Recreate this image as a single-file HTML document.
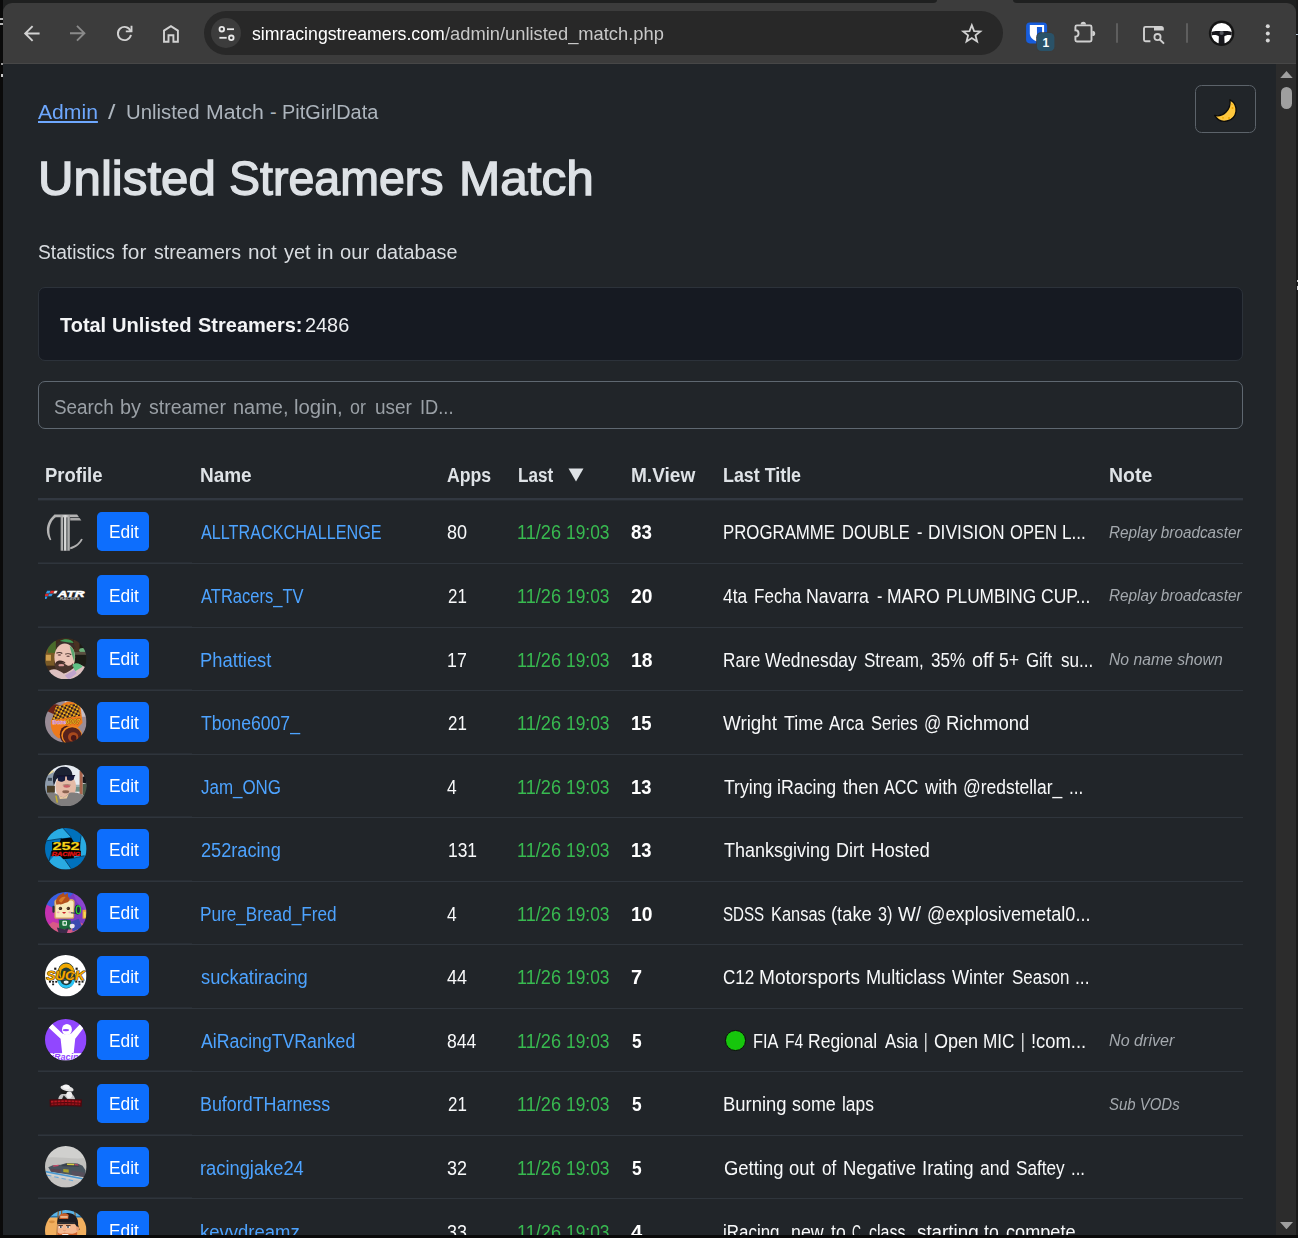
<!DOCTYPE html>
<html lang="en"><head><meta charset="utf-8"><title>Unlisted Streamers Match</title>
<style>
html,body{margin:0;padding:0}
body{width:1298px;height:1238px;background:#0a0a0a;position:relative;overflow:hidden;font-family:"Liberation Sans",sans-serif}
.t{position:absolute;white-space:nowrap;line-height:1;display:inline-block;transform-origin:0 0}
.abs,#frame div,#frame svg{position:absolute}
#top{left:3.2px;top:0;width:1292.8px;height:14px;background:#1f2020}
#tab{left:930px;top:0;width:90px;height:12px;background:#3c3c3c}
#topL{left:3.2px;top:0;width:933.8px;height:3px;background:#1f2020;border-bottom-right-radius:4px 3px}
#topR{left:1013px;top:0;width:283px;height:3px;background:#1f2020;border-bottom-left-radius:4px 3px}
.mk{background:#b4b4b4}
#toolbar{left:3.2px;top:3px;width:1292.5px;height:60.5px;background:#3c3c3c;border-radius:9px 9px 0 0}
#tbline{left:3.2px;top:63px;width:1292.5px;height:1px;background:#474747}
#rstrip{left:1295.7px;top:0;width:3px;height:1238px;background:#1b1b1b}
#page{left:3.2px;top:64px;width:1272.8px;height:1171.3px;background:#212529}
#sb{left:1276px;top:64px;width:19.7px;height:1171.3px;background:#2c2c2c}
#thumb{left:1280.5px;top:87.2px;width:11.5px;height:22px;border-radius:6px;background:#9f9f9f}
#omni{left:204px;top:11px;width:799px;height:43.5px;border-radius:22px;background:#282828}
#chip{left:211px;top:18px;width:30px;height:30px;border-radius:15px;background:#3c3c3c}
.sep{width:2px;height:20px;top:23px;background:#5e5e5e;border-radius:1px}
#moonbtn{left:1195px;top:85px;width:61px;height:48px;box-sizing:border-box;border:1.25px solid #5c636a;border-radius:6.5px}
#stats{left:38px;top:287px;width:1205px;height:73.5px;box-sizing:border-box;border:1px solid #2c323a;border-radius:7px;background:#161a22}
#search{left:38px;top:381px;width:1205px;height:48px;box-sizing:border-box;border:1.25px solid #5f6871;border-radius:7px;background:#212529}
#hb{left:38px;top:498px;width:1205px;height:2px;background:#323841}
#hb2{left:38px;top:500px;width:1205px;height:1px;background:#272c31}
.rb{left:38px;width:1205px;height:1px;background:#2f353c}
.rb2{left:38px;width:154px;height:1px;background:#282d33}
.btn{left:96.8px;width:52.4px;height:39.6px;border-radius:4.7px;background:#0d6efd}
.av{left:45.3px;overflow:hidden}
.gdot{left:725px;width:20.6px;height:20.6px;border-radius:10.3px;background:#16c60c;box-sizing:border-box;border:1px solid #0b0b0b}
</style></head>
<body>
<div id="frame">
<div id="top"></div><div id="tab"></div><div id="topL"></div><div id="topR"></div>
<div id="toolbar"></div><div id="tbline"></div>
<div id="rstrip"></div>
<div class="mk" style="left:0;top:18px;width:3.3px;height:2px"></div><div class="mk" style="left:0;top:23px;width:3.3px;height:2px"></div>
<div class="mk" style="left:1px;top:63px;width:2.2px;height:2px;background:#9a9a9a"></div><div class="mk" style="left:1px;top:74px;width:2.2px;height:2.5px;background:#c8c8c8"></div>
<div class="mk" style="left:1296px;top:33.500px;width:2px;height:1.5px;background:#b8c8d8"></div>
<div class="mk" style="left:1296.5px;top:280px;width:1.5px;height:2px;background:#d0d0d0"></div><div class="mk" style="left:1296.5px;top:286px;width:1.5px;height:4px;background:#d0d0d0"></div>
<div id="omni"></div><div id="chip"></div>
<div class="sep" style="left:1115.8px"></div><div class="sep" style="left:1185.8px"></div>
<svg id="tbicons" style="left:0;top:0" width="1298" height="64" viewBox="0 0 1298 64" fill="none" stroke="#d2d2d2" stroke-width="1.9">
<!-- back -->
<path d="M39.6 33.5H26M32.6 26.1L25.2 33.5L32.6 40.9"/>
<!-- forward (disabled) -->
<path d="M70 33.2H83.6M77 25.8L84.4 33.2L77 40.6" stroke="#8a8a8a"/>
<!-- reload -->
<path d="M130.95 34.9A6.6 6.6 0 1 1 130.6 31"/>
<path d="M131.5 25.7V31.4H125.8"/>
<!-- home -->
<path d="M164 41.7V30.6L170.95 26.1L177.9 30.6V41.7H173.4V35.3H168.5V41.7Z"/>
<!-- tune -->
<g stroke="#e8e8e8" stroke-width="1.8">
<circle cx="221.8" cy="29.2" r="2.3"/><path d="M227 29.2H234"/>
<circle cx="231.3" cy="37.8" r="2.3"/><path d="M219.4 37.8H226.7"/>
</g>
<!-- star -->
<path d="M971.80 25.20L974.09 31.04L980.36 31.42L975.51 35.41L977.09 41.48L971.80 38.10L966.51 41.48L968.09 35.41L963.24 31.42L969.51 31.04Z" stroke-width="1.8" stroke-linejoin="miter"/>
<!-- bitwarden -->
<rect x="1026.1" y="22.4" width="21" height="21" rx="3.8" fill="#175ddc" stroke="none"/>
<path d="M1029.8 25H1044.1V33.5C1044.1 37.5 1040.5 40 1036.95 41.6C1033.4 40 1029.8 37.5 1029.8 33.5Z" fill="#ffffff" stroke="none"/>
<path d="M1036.95 27H1042.1V33.5C1042.1 36.3 1039.6 38.2 1036.95 39.5Z" fill="#175ddc" stroke="none"/>
<rect x="1036.2" y="32.2" width="19" height="19.4" rx="5" fill="#3c3c3c" stroke="none"/>
<rect x="1037" y="33" width="17.4" height="18" rx="4.3" fill="#2a5268" stroke="none"/>
<!-- puzzle -->
<path d="M1075.4 36.6A3.15 3.15 0 0 0 1075.4 30.3V26.9Q1075.4 25.4 1076.9 25.4H1090Q1091.5 25.4 1091.5 26.9V40Q1091.5 41.5 1090 41.5H1076.9Q1075.4 41.5 1075.4 40Z" stroke="#d0d0d0"/>
<path d="M1080.6 24.6A2.7 2.9 0 0 1 1086 24.6Z" fill="#d0d0d0" stroke="none"/>
<path d="M1092.3 30.7A2.9 2.7 0 0 1 1092.3 36.1Z" fill="#d0d0d0" stroke="none"/>
<!-- tab search -->
<path d="M1150.4 41.2H1145.5Q1144 41.2 1144 39.7V28.4Q1144 26.9 1145.5 26.9H1155" stroke="#d0d0d0"/>
<path d="M1154 25.9H1161.3Q1163.8 25.9 1163.8 28.4V30.6H1154Z" fill="#d0d0d0" stroke="none"/>
<circle cx="1157.5" cy="37.1" r="3.1" stroke="#d0d0d0" stroke-width="1.8"/>
<path d="M1159.8 39.5L1164 43.6" stroke="#d0d0d0"/>
<!-- profile -->
<circle cx="1221.6" cy="33.3" r="12.7" fill="#151515" stroke="none"/>
<circle cx="1221.6" cy="33.3" r="10.4" fill="#ffffff" stroke="none"/>
<path d="M1211.3 32.2C1215 30.6 1218 31.2 1221.6 31.2C1225.2 31.2 1228.2 30.6 1231.9 32.2L1231.6 35.6C1228 34.6 1226 35.2 1224.3 36.6L1224.6 44H1218.6L1218.9 36.6C1217.2 35.2 1215.2 34.6 1211.6 35.6Z" fill="#17171c" stroke="none"/>
<circle cx="1221.6" cy="33" r="2.1" fill="#55585f" stroke="none"/>
<!-- menu dots -->
<g fill="#d6d6d6" stroke="none"><circle cx="1267.8" cy="26.3" r="2"/><circle cx="1267.8" cy="33.5" r="2"/><circle cx="1267.8" cy="40.6" r="2"/></g>
</svg>

<div id="page"></div>
<div id="sb"></div><div id="thumb"></div>
<svg style="left:1279.8px;top:71px" width="13" height="7.3" viewBox="0 0 13 7.3"><path d="M0 7.3 L6.5 0 L13 7.3Z" fill="#9f9f9f"/></svg>
<svg style="left:1279.8px;top:1222.2px" width="13" height="7.3" viewBox="0 0 13 7.3"><path d="M0 0 L6.5 7.3 L13 0Z" fill="#9f9f9f"/></svg>
<div id="moonbtn"></div>
<svg style="left:1210px;top:95px" width="32" height="32" viewBox="1210 95 32 32">
<path d="M1229.9 99.6C1239.5 105.5 1237.5 118.5 1227 121C1222 122.2 1217.3 119.8 1214.6 115.4C1222.5 117.6 1231.5 110 1229.9 99.6Z" fill="#ffc83d" stroke="#0c0c0c" stroke-width="1.3" stroke-linejoin="round"/>
<circle cx="1232.5" cy="108" r="1" fill="#f0a800"/><circle cx="1232" cy="104.6" r="0.7" fill="#f0a800"/><circle cx="1223" cy="117.8" r="0.9" fill="#f0a800"/><circle cx="1229" cy="118" r="1" fill="#f0a800"/>
</svg>

<div id="stats"></div>
<div id="search"></div>
<svg width="0" height="0" style="left:0;top:0"><defs><clipPath id="cc"><circle cx="21" cy="21" r="21"/></clipPath><filter id="bl" x="-10%" y="-10%" width="120%" height="120%"><feGaussianBlur stdDeviation="0.7"/></filter></defs></svg>
<div id="hb"></div><div id="hb2"></div>
<div class="rb" style="top:563px"></div><div class="rb2" style="top:562px"></div>
<div class="btn" style="top:511.55px"></div>
<svg class="av" style="top:510.60px" width="41.5" height="41.5" viewBox="0 0 42 42"><g><g><defs><linearGradient id="sg" x1="0" x2="1"><stop offset="0" stop-color="#9a9a9a"/><stop offset=".5" stop-color="#dcdcdc"/><stop offset="1" stop-color="#9a9a9a"/></linearGradient></defs>
<path d="M9.5 3.6H32.5L34.5 6.2H7.5Z" fill="#b4b4b4"/>
<path d="M25.5 7H35L36.800 9.6H25.5Z" fill="#a8a8a8"/>
<rect x="15.8" y="4" width="9.4" height="36.2" fill="url(#sg)"/>
<path d="M18.7 6.400V40.2M22.2 6.4V40.2" stroke="#2a2d31" stroke-width="0.9"/>
<path d="M9.5 4C1.500 10 -0.5 21 5 29.5L6.400 29C2.5 20 4.5 11 11.500 5.500Z" fill="#b4b4b4"/>
<path d="M25.5 38.800C31.500 37.2 36.200 33.400 38.2 28.6L36.6 28C34.500 32 31 35 25.5 36.600Z" fill="#b0b0b0"/></g></g></svg>
<div class="rb" style="top:627px"></div><div class="rb2" style="top:626px"></div>
<div class="btn" style="top:575.10px"></div>
<svg class="av" style="top:574.15px" width="41.5" height="41.5" viewBox="0 0 42 42"><g><g><g transform="translate(0.6 0) skewX(-28)"><rect x="10.6" y="17" width="3.6" height="2.7" fill="#2f9be8"/><rect x="14.4" y="17" width="3.6" height="2.7" fill="#e02a2a"/><rect x="18.2" y="17" width="3" height="2.7" fill="#f0f0f0"/><rect x="10.6" y="19.9" width="3.6" height="2.7" fill="#e02a2a"/><rect x="14.4" y="19.9" width="3.6" height="2.7" fill="#2f9be8"/><rect x="10.6" y="22.8" width="3.6" height="2.4" fill="#2f9be8"/></g>
<text x="13" y="23" font-family='"Liberation Sans",sans-serif' font-size="9.2" font-weight="700" font-style="italic" fill="#ffffff" stroke="#ffffff" stroke-width="0.5" textLength="27" lengthAdjust="spacingAndGlyphs">ATR</text>
<text x="15" y="26.4" font-family='"Liberation Sans",sans-serif' font-size="2.6" font-weight="700" font-style="italic" fill="#b8b8b8" textLength="20" lengthAdjust="spacingAndGlyphs">RACERS</text></g></g></svg>
<div class="rb" style="top:690px"></div><div class="rb2" style="top:689px"></div>
<div class="btn" style="top:638.65px"></div>
<svg class="av" style="top:637.70px" width="41.5" height="41.5" viewBox="0 0 42 42"><g clip-path="url(#cc)"><g filter="url(#bl)"><rect width="42" height="42" fill="#3c2c1a"/>
<rect x="0" y="8" width="10" height="20" fill="#7a5a26"/>
<rect x="1" y="17" width="5" height="6" fill="#d0a050"/>
<rect x="3" y="3" width="8" height="12" fill="#4a6a2a"/>
<rect x="29" y="0" width="13" height="30" fill="#1c1a14"/>
<rect x="29" y="2" width="6" height="12" fill="#4a3020"/>
<ellipse cx="38" cy="12.500" rx="3.500" ry="2.500" fill="#6ab07a"/>
<rect x="30" y="14" width="12" height="3" fill="#5a5040"/>
<path d="M11 9C12 0 30 0 31 11L27 8L14 8Z" fill="#3a2e2a"/>
<path d="M15 3C20 0 27 1 29 5L24 4.500Z" fill="#3f9a55"/>
<ellipse cx="20" cy="19.500" rx="10.500" ry="14" fill="#ecc4b6"/>
<path d="M25 8C30 10 31 18 29.500 24L27 16Z" fill="#5aa870"/>
<path d="M9.500 24C9 32 14 35.500 19 35.500C24 35.500 28 32 28.500 25C26 29 23 28.500 20.500 26.500C19 23.500 13 23 10.500 26Z" fill="#4a342e"/>
<path d="M11 24.500C13 22 19 22 21 25.500C18 24.500 14 24.600 11 26.500Z" fill="#3e2a26"/>
<ellipse cx="16.500" cy="27.500" rx="3" ry="1.200" fill="#d89a98"/>
<path d="M3 34C8 30 12 31 19 36C26 34 30 28 36 27L42 30V42H0Z" fill="#dcc0c0"/>
<path d="M28 27C32 24 36 26 38 29L30 34Z" fill="#5ec084"/>
<path d="M20 38L30 32L32 36L24 42Z" fill="#c0a4cc"/>
<path d="M11.500 15.500C13 14.500 16 14.500 17.500 15.600M20.500 16.500C22 15.600 25 15.800 26.500 17" stroke="#4a3430" stroke-width="1.200" fill="none"/>
<ellipse cx="14.600" cy="17.200" rx="1.800" ry="0.800" fill="#6a4a48"/><ellipse cx="23.400" cy="18.400" rx="1.800" ry="0.800" fill="#6a4a48"/></g></g></svg>
<div class="rb" style="top:754px"></div><div class="rb2" style="top:753px"></div>
<div class="btn" style="top:702.20px"></div>
<svg class="av" style="top:701.25px" width="41.5" height="41.5" viewBox="0 0 42 42"><g clip-path="url(#cc)"><g filter="url(#bl)"><rect width="42" height="42" fill="#9a8c96"/>
<rect x="20" y="0" width="22" height="16" fill="#c4bcc6"/>
<defs><pattern id="chk" width="4.600" height="4.600" patternUnits="userSpaceOnUse" patternTransform="rotate(-17)"><rect width="4.600" height="4.600" fill="#f4b21c"/><rect width="2.300" height="2.300" fill="#2c1222"/><rect x="2.300" y="2.300" width="2.300" height="2.300" fill="#2c1222"/></pattern></defs>
<path d="M2 10C4 4 10 2 14 4L10 14Z" fill="#6a2418"/>
<path d="M6 20C10 12 14 4 22 1C28 0 34 3 36 6L38 22L30 30L14 38C8 34 5 28 6 20Z" fill="#ee7a1c"/>
<path d="M11 5L34 2.500L36 15L7 19.500Z" fill="url(#chk)"/>
<path d="M36 7L41 12L40 6Z" fill="#f6f6f6"/>
<ellipse cx="22" cy="34" rx="7" ry="9" fill="#4a1a14"/>
<ellipse cx="27" cy="35" rx="10.500" ry="10" fill="#f08a20"/>
<ellipse cx="27.500" cy="35.500" rx="9.400" ry="9" fill="#56201a"/>
<ellipse cx="28.500" cy="36.500" rx="5.200" ry="5" fill="#a8481e"/>
<ellipse cx="29" cy="37.500" rx="2.800" ry="3" fill="#4a1812"/>
<text x="7" y="23.400" font-family='"Liberation Sans",sans-serif' font-size="6.200" font-weight="700" font-style="italic" fill="#c276c6" stroke="#f4e4f4" stroke-width="0.500" paint-order="stroke" textLength="14" lengthAdjust="spacingAndGlyphs">tbone</text>
<text x="21" y="23" font-family='"Liberation Sans",sans-serif' font-size="6.800" font-weight="700" font-style="italic" fill="#e6b41e" stroke="#4a3008" stroke-width="0.400" paint-order="stroke" textLength="14.500" lengthAdjust="spacingAndGlyphs">6007</text></g></g></svg>
<div class="rb" style="top:817px"></div><div class="rb2" style="top:816px"></div>
<div class="btn" style="top:765.75px"></div>
<svg class="av" style="top:764.80px" width="41.5" height="41.5" viewBox="0 0 42 42"><g clip-path="url(#cc)"><g filter="url(#bl)"><rect width="42" height="42" fill="#e6ebf1"/>
<path d="M0 10L9 6V32H0Z" fill="#8e9cac"/>
<rect x="2" y="21" width="8" height="7" fill="#4a3c26"/>
<rect x="3" y="13" width="4" height="3" fill="#3a4654"/>
<path d="M0 9L8 5L9 7L0 12Z" fill="#e8d8a0"/>
<rect x="26" y="20" width="10" height="2" fill="#9ab0b4"/>
<rect x="26" y="22" width="10" height="5" fill="#6f8f86"/>
<rect x="35" y="6" width="3.200" height="24" fill="#a8644c"/>
<path d="M38.200 12L42 11V19L38.200 18Z" fill="#16161a"/>
<rect x="38.200" y="19" width="3.800" height="12" fill="#4a5a4a"/>
<ellipse cx="21" cy="22" rx="10.400" ry="13" fill="#e4baa6"/>
<path d="M9 21C5.500 8 12 1.500 19.500 1.800C26 2 28.500 8 27.500 12.500C22 10.500 14 11.500 11.500 14.500Z" fill="#1b2032"/>
<path d="M12.800 11.500L20.500 10.800L20.200 15.600C17.500 17.400 14.500 17.200 13.200 15.800Z" fill="#151a3c"/>
<path d="M22 10.800L30 11L29 14.600C27 16.400 24 16.200 22.400 15Z" fill="#151a3c"/>
<path d="M12 11.200L30.500 10.600" stroke="#10122a" stroke-width="1.100"/>
<ellipse cx="22" cy="21.600" rx="3.400" ry="1.400" fill="#c85e66"/>
<path d="M18 20.400Q22 19 26 20.400" stroke="#8a6a5a" stroke-width="0.700" fill="none"/>
<ellipse cx="21" cy="27" rx="3.500" ry="1.500" fill="#8a6250"/>
<path d="M0 30C6 27 11 28 14 31L19 33L25 28C31 27 38 29 42 33V42H0Z" fill="#807e7e"/>
<path d="M14 31L19 33L24 29L22 34L15 34.500Z" fill="#e8c8a0"/>
<path d="M11 31L12.500 38" stroke="#c8b428" stroke-width="1.400"/></g></g></svg>
<div class="rb" style="top:881px"></div><div class="rb2" style="top:880px"></div>
<div class="btn" style="top:829.30px"></div>
<svg class="av" style="top:828.35px" width="41.5" height="41.5" viewBox="0 0 42 42"><g clip-path="url(#cc)"><g><rect width="42" height="42" fill="#0071bc"/>
<path d="M0 0H18L26.300 9L17 10.500L1 13Z" fill="#29abe2"/>
<path d="M36.600 7.600L42 6V30L40 28L28.800 30.500L35 18Z" fill="#29abe2"/>
<path d="M4 34L12 25L20 32L27 42H4Z" fill="#29abe2"/>
<path d="M18 0L26.300 9M36.600 7.600L35 18M40 28L28.800 30.500M27 42L20 32M4 34L6.500 24M1 13L17 10.500" stroke="#062a44" stroke-width="0.700" fill="none"/>
<path d="M16 11L26.500 9.500L31.500 18L29 30.500L18.500 31.500L12 24.500Z" fill="#040404"/>
<rect x="7.200" y="14.200" width="28.400" height="8.800" fill="#040404"/><rect x="6.400" y="23" width="30" height="5.400" fill="#040404"/>
<text x="7.600" y="22.400" font-family='"Liberation Sans",sans-serif' font-size="10.900" font-weight="700" fill="#f5d21a" stroke="#5a4400" stroke-width="0.600" paint-order="stroke" textLength="27.500" lengthAdjust="spacingAndGlyphs">252</text>
<text x="6.800" y="27.900" font-family='"Liberation Sans",sans-serif' font-size="5.800" font-weight="700" font-style="italic" fill="#e41212" stroke="#e41212" stroke-width="0.300" textLength="29" lengthAdjust="spacingAndGlyphs">RACING</text></g></g></svg>
<div class="rb" style="top:944px"></div><div class="rb2" style="top:943px"></div>
<div class="btn" style="top:892.85px"></div>
<svg class="av" style="top:891.90px" width="41.5" height="41.5" viewBox="0 0 42 42"><g clip-path="url(#cc)"><g filter="url(#bl)"><rect width="42" height="42" fill="#7a3ac0"/>
<path d="M0 0H30L18 12L0 20Z" fill="#3a5ee0"/>
<path d="M0 12L12 18L16 42H0Z" fill="#c432b0"/>
<path d="M28 0H42V20L32 10Z" fill="#8a44d0"/>
<rect x="38" y="18" width="4" height="9" fill="#f0a040"/><rect x="39.200" y="20" width="2" height="6" fill="#f0e050"/>
<path d="M8 30L20 34L34 30L42 34V42H0V36Z" fill="#d85a86"/>
<path d="M26 30L34 27L38 36L28 40Z" fill="#3a4ab0"/>
<path d="M9.500 11C9 7 13 6.500 15 7.500H25C27 6.500 30.500 7 30 11L29.500 25.500Q29.500 27 28 27H11Q9.500 27 9.500 25.500Z" fill="#d8a860"/>
<path d="M10.800 11.500C10.500 8.500 13.500 8 15.200 9H24.800C26.500 8 29.200 8.500 28.900 11.500L28.400 24.800Q28.400 25.800 27.400 25.800H11.800Q10.800 25.800 10.800 24.800Z" fill="#f8e8ba"/>
<path d="M11.500 13C10 8 13 3 17 2L18.500 0.500L20 3L23 1L23.500 5C26 7 24.500 10 22 10.500C19 11 17 13 14.500 12.500Z" fill="#b4501a"/>
<path d="M14 9C15 6 18 4 21 5C19 7 18 9 16.500 11Z" fill="#d87a2a"/>
<rect x="7.500" y="14" width="2.200" height="7" rx="1" fill="#26303a"/>
<ellipse cx="33" cy="18" rx="3.200" ry="5" fill="#1c2a44"/>
<ellipse cx="33.800" cy="18" rx="2.200" ry="4" fill="none" stroke="#2ed42e" stroke-width="1.200"/>
<path d="M31 21.500L26 21" stroke="#1c2a44" stroke-width="1"/>
<circle cx="15.600" cy="16.600" r="1.700" fill="#3a1c10"/><circle cx="23.600" cy="16.600" r="1.700" fill="#3a1c10"/>
<circle cx="15.200" cy="16.100" r="0.500" fill="#ffffff"/><circle cx="23.200" cy="16.100" r="0.500" fill="#ffffff"/>
<ellipse cx="13.400" cy="20.600" rx="1.400" ry="0.900" fill="#f4a0b4"/><ellipse cx="25" cy="20.600" rx="1.400" ry="0.900" fill="#f4a0b4"/>
<path d="M17.300 20.300Q19.300 23.500 21.300 20.300Z" fill="#c8202a"/>
<path d="M14 28.500Q20 27 26 28.500L26.500 38H14.500Z" fill="#1a6a3c"/>
<rect x="17.600" y="29.200" width="4.600" height="5" rx="1" fill="#e8f4ea"/><rect x="18.800" y="30.200" width="2.400" height="2.600" fill="#2a8a4c"/>
<ellipse cx="27.500" cy="34.500" rx="2.600" ry="2.400" fill="#ece4ec"/>
<path d="M12 36L20 38L24 36L22 42H14Z" fill="#3a2a4a"/></g></g></svg>
<div class="rb" style="top:1008px"></div><div class="rb2" style="top:1007px"></div>
<div class="btn" style="top:956.40px"></div>
<svg class="av" style="top:955.45px" width="41.5" height="41.5" viewBox="0 0 42 42"><g clip-path="url(#cc)"><g><rect width="42" height="42" fill="#ffffff"/>
<ellipse cx="21.4" cy="20.8" rx="9.4" ry="13.2" fill="#1d3a3a"/>
<ellipse cx="21.4" cy="17" rx="8" ry="8.4" fill="#f2a900"/>
<ellipse cx="21.4" cy="19" rx="5.6" ry="6.4" fill="#1d3a3a"/>
<path d="M12.6 25H30.2C29.8 30.4 26 33.2 21.4 33.4C16.8 33.2 13 30.4 12.6 25Z" fill="#29c5f6"/>
<path d="M15.4 25H27.4C27 28.6 24.500 30.4 21.4 30.5C18.3 30.4 15.800 28.6 15.4 25Z" fill="#1d3a3a"/>
<ellipse cx="21.4" cy="27.4" rx="2.6" ry="1.6" fill="#f4f4f4"/>
<g fill="#1a1a1a"><rect x="9.300" y="12.8" width="2.2" height="2.2"/><rect x="30.900" y="12.8" width="2.200" height="2.2"/>
<rect x="4" y="26.2" width="2" height="1.8"/><rect x="7.2" y="26.2" width="2" height="1.8"/><rect x="10.4" y="26.2" width="2" height="1.8"/><rect x="7.2" y="28.8" width="2" height="1.8"/>
<rect x="30.6" y="26.2" width="2" height="1.8"/><rect x="33.8" y="26.2" width="2" height="1.8"/><rect x="37" y="26.2" width="2" height="1.8"/><rect x="33.8" y="28.8" width="2" height="1.8"/></g>
<text x="1.2" y="25" font-family='"Liberation Sans",sans-serif' font-size="12.4" font-weight="700" font-style="italic" fill="#f7a900" stroke="#4a3c10" stroke-width="1.1" paint-order="stroke" textLength="39" lengthAdjust="spacingAndGlyphs">SUCK</text></g></g></svg>
<div class="rb" style="top:1071px"></div><div class="rb2" style="top:1070px"></div>
<div class="btn" style="top:1019.95px"></div>
<svg class="av" style="top:1019.00px" width="41.5" height="41.5" viewBox="0 0 42 42"><g clip-path="url(#cc)"><g><rect width="42" height="42" fill="#9147ff"/>
<path d="M3.6 8.600L7.4 5L17.5 14.6Q22 16.8 26.500 14.600L35.4 5.200L39.2 8.800L30.6 20L29 35V37H17.400V35L15.8 20Z" fill="#ffffff"/>
<ellipse cx="22.2" cy="10.6" rx="5" ry="5.600" fill="#ffffff"/>
<ellipse cx="21.2" cy="11.200" rx="3.2" ry="1.2" fill="#9147ff"/>
<rect x="0" y="34.6" width="42" height="7.400" fill="#ffffff"/>
<text x="6.500" y="41.6" font-family='"Liberation Sans",sans-serif' font-size="8.4" font-weight="700" font-style="italic" fill="#9147ff" textLength="33" lengthAdjust="spacingAndGlyphs">iRacing</text></g></g></svg>
<div class="gdot" style="top:1030.40px"></div>
<div class="rb" style="top:1135px"></div><div class="rb2" style="top:1134px"></div>
<div class="btn" style="top:1083.50px"></div>
<svg class="av" style="top:1082.55px" width="41.5" height="41.5" viewBox="0 0 42 42"><g><g><g filter="url(#bl)"><path d="M13.5 16.6C13.5 12.5 16.5 10.5 19.5 11.2C23 8 29 10 30.6 16.6Z" fill="#c4c4c4"/>
<ellipse cx="19.6" cy="8.6" rx="4.4" ry="2.6" fill="#1c1c1c"/>
<ellipse cx="24.5" cy="12" rx="3" ry="3.4" fill="#efefef"/>
<path d="M19 12.5L23 16.6H17Z" fill="#222"/>
<ellipse cx="22.3" cy="5.6" rx="6.8" ry="2.7" transform="rotate(14 22.3 5.6)" fill="#e4e4e4"/>
<ellipse cx="21.6" cy="3.9" rx="3.6" ry="2.3" transform="rotate(10 21.6 3.9)" fill="#f6f6f6"/></g>
<path d="M4.5 16.8Q21 15.6 37.5 16.8L37.1 24.1Q21 22.6 4.9 24.1Z" fill="#4e080e"/>
<path d="M6 18Q21 16.9 36 18V19.9Q21 18.8 6 19.9Z" fill="#b81822"/>
<path d="M6.4 20.7Q21 19.6 35.6 20.7V22.6Q21 21.4 6.4 22.6Z" fill="#96121a"/>
<path d="M9 17.5V23M12.5 17.3V23M16 17.2V22.6M19.5 17.1V22.4M23 17.1V22.4M26.5 17.2V22.6M30 17.3V23M33.4 17.5V23" stroke="#5e0a10" stroke-width="0.9"/></g></g></svg>
<div class="rb" style="top:1198px"></div><div class="rb2" style="top:1197px"></div>
<div class="btn" style="top:1147.05px"></div>
<svg class="av" style="top:1146.10px" width="41.5" height="41.5" viewBox="0 0 42 42"><g clip-path="url(#cc)"><g filter="url(#bl)"><rect width="42" height="42" fill="#d0d0ce"/>
<path d="M0 12C10 10 30 14 42 12V26H0Z" fill="#c0c0be"/>
<path d="M0 30L42 36V42H0Z" fill="#c6c4c2"/>
<path d="M3.300 21.500L8 19.600L16 19L22 17.300L33 17.600L38 20L41 24.500L41 31.500L6 26Z" fill="#4a545f"/>
<path d="M16.500 19.300L22.500 17.800L32.500 18.200L35 21L17 20.500Z" fill="#39424d"/>
<path d="M8 19.800L13.700 19V20.300L8.500 21Z" fill="#d24a6a"/>
<path d="M22 17.800L29.600 18V19.400L22.500 19.300Z" fill="#d8cc40"/>
<path d="M30 18.200L33.500 18.600L34 19.800L30.200 19.400Z" fill="#d24a6a"/>
<path d="M18.500 23.300L24 23.800V27L18.500 26.400Z" fill="#a8a02a"/>
<path d="M6 23L16 24V27.400L6 25.800Z" fill="#5a4652"/>
<path d="M27 25L40 27V31.300L27 29.300Z" fill="#56505c"/>
<path d="M0.500 25L38 32.500V34L0.500 26.800Z" fill="#4a98d0"/>
<path d="M2 29.500L30 35.500" stroke="#6aa8d8" stroke-width="1.100" stroke-dasharray="4.500 3"/></g></g></svg>
<div class="rb" style="top:1262px"></div><div class="rb2" style="top:1261px"></div>
<div class="btn" style="top:1210.60px"></div>
<svg class="av" style="top:1209.65px" width="41.5" height="41.5" viewBox="0 0 42 42"><g clip-path="url(#cc)"><g filter="url(#bl)"><rect width="42" height="42" fill="#f2b05e"/>
<rect x="0" y="0" width="42" height="6.500" fill="#5ab4e8"/>
<rect x="0" y="6" width="42" height="1.600" fill="#2a78b0"/>
<path d="M13.500 0L12 30M17 0L16.500 8M30 0L31 10" stroke="#8a5a2a" stroke-width="1.200"/>
<ellipse cx="7" cy="12" rx="3" ry="1.500" fill="#d89040"/>
<path d="M12.500 14C12 5 18 2.500 24 3C31 3.500 34 9 33.500 15L35 20L31 21L30 13L14 12.500Z" fill="#1c1c20"/>
<path d="M14.500 5.500C17 2.800 22 2.800 24 5L23.500 9H14.500Z" fill="#c8602a"/>
<rect x="15.500" y="6" width="7.500" height="2" fill="#e8b890"/>
<path d="M12.600 12.500L30 12L30.500 14.500L13 15Z" fill="#2a2a2e"/>
<path d="M12.600 14.500H30.500L33 18L32.500 30L12.600 30Z" fill="#f5b890"/>
<ellipse cx="33" cy="19" rx="1.500" ry="2.300" fill="#e8a07a"/>
<path d="M12.600 22C14 25 18 24 20 23C24 24 29 25 32.600 22V42H12.600Z" fill="#d2642a"/>
<ellipse cx="20.500" cy="25.500" rx="3.500" ry="1.400" fill="#f8f4f0"/>
<ellipse cx="15.800" cy="17.200" rx="2" ry="1" fill="#f8f8f8"/><ellipse cx="23.500" cy="17.200" rx="2" ry="1" fill="#f8f8f8"/>
<circle cx="16" cy="17.200" r="0.900" fill="#2a3a4a"/><circle cx="23.300" cy="17.200" r="0.900" fill="#2a3a4a"/>
<path d="M13.500 15.800h4.600M21.300 15.800h4.600" stroke="#4a2a1a" stroke-width="1"/>
<path d="M18.500 20.500Q19.500 21.500 21 20.500" stroke="#d8906a" stroke-width="0.900" fill="none"/></g></g></svg>
<svg style="left:568.4px;top:468.3px" width="16" height="14" viewBox="0 0 16 14"><path d="M0.5 0.5 L15.5 0.5 L8 13.5Z" fill="#dee2e6"/></svg>
</div>
<span class="t" style="left:252.00px;top:23.92px;font-size:19px;color:#ffffff;transform:scaleX(0.9316);">simracingstreamers.com</span>
<span class="t" style="left:444.50px;top:23.92px;font-size:19px;color:#c8c8c8;transform:scaleX(0.9637);">/admin/unlisted_match.php</span>
<span class="t" style="left:1042.60px;top:36.84px;font-size:12px;color:#ffffff;font-weight:700;">1</span>
<span class="t" style="left:37.70px;top:102.07px;font-size:20px;color:#6ea8fe;transform:scaleX(1.0564);text-decoration:underline;text-underline-offset:2px;">Admin</span>
<span class="t" style="left:107.50px;top:102.07px;font-size:20px;color:#adb5bd;transform:scaleX(1.3333);">/</span>
<span class="t" style="left:125.88px;top:102.07px;font-size:20px;color:#adb5bd;transform:scaleX(1.0166);">Unlisted</span>
<span class="t" style="left:205.64px;top:102.07px;font-size:20px;color:#adb5bd;transform:scaleX(1.0623);">Match</span>
<span class="t" style="left:270.00px;top:102.07px;font-size:20px;color:#adb5bd;transform:scaleX(1.0000);">-</span>
<span class="t" style="left:282.10px;top:102.07px;font-size:20px;color:#adb5bd;transform:scaleX(0.9952);">PitGirlData</span>
<span class="t" style="left:37.56px;top:153.86px;font-size:48.6px;color:#dee2e6;transform:scaleX(1.0128);-webkit-text-stroke:1.35px #dee2e6;">Unlisted</span>
<span class="t" style="left:228.89px;top:153.86px;font-size:48.6px;color:#dee2e6;transform:scaleX(0.9573);-webkit-text-stroke:1.35px #dee2e6;">Streamers</span>
<span class="t" style="left:459.04px;top:153.86px;font-size:48.6px;color:#dee2e6;transform:scaleX(1.0190);-webkit-text-stroke:1.35px #dee2e6;">Match</span>
<span class="t" style="left:37.80px;top:242.07px;font-size:20px;color:#d8dce0;transform:scaleX(0.9610);">Statistics</span>
<span class="t" style="left:122.20px;top:242.07px;font-size:20px;color:#d8dce0;transform:scaleX(1.0431);">for</span>
<span class="t" style="left:153.70px;top:242.07px;font-size:20px;color:#d8dce0;transform:scaleX(0.9797);">streamers</span>
<span class="t" style="left:247.56px;top:242.07px;font-size:20px;color:#d8dce0;transform:scaleX(1.0350);">not</span>
<span class="t" style="left:283.60px;top:242.07px;font-size:20px;color:#d8dce0;transform:scaleX(0.9992);">yet</span>
<span class="t" style="left:317.04px;top:242.07px;font-size:20px;color:#d8dce0;transform:scaleX(1.0637);">in</span>
<span class="t" style="left:339.50px;top:242.07px;font-size:20px;color:#d8dce0;transform:scaleX(1.0087);">our</span>
<span class="t" style="left:376.40px;top:242.07px;font-size:20px;color:#d8dce0;transform:scaleX(0.9906);">database</span>
<span class="t" style="left:59.70px;top:314.67px;font-size:20px;color:#f3f4f6;font-weight:700;transform:scaleX(0.9971);">Total</span>
<span class="t" style="left:112.19px;top:314.67px;font-size:20px;color:#f3f4f6;font-weight:700;transform:scaleX(1.0068);">Unlisted</span>
<span class="t" style="left:197.80px;top:314.67px;font-size:20px;color:#f3f4f6;font-weight:700;transform:scaleX(0.9996);">Streamers:</span>
<span class="t" style="left:305.31px;top:314.67px;font-size:20px;color:#eceef0;transform:scaleX(0.9938);">2486</span>
<span class="t" style="left:54.20px;top:397.07px;font-size:20px;color:#9aa0a6;transform:scaleX(0.9430);">Search</span>
<span class="t" style="left:119.71px;top:397.07px;font-size:20px;color:#9aa0a6;transform:scaleX(0.9939);">by</span>
<span class="t" style="left:148.50px;top:397.07px;font-size:20px;color:#9aa0a6;transform:scaleX(0.9754);">streamer</span>
<span class="t" style="left:232.90px;top:397.07px;font-size:20px;color:#9aa0a6;transform:scaleX(0.9976);">name,</span>
<span class="t" style="left:293.88px;top:397.07px;font-size:20px;color:#9aa0a6;transform:scaleX(1.0187);">login,</span>
<span class="t" style="left:350.20px;top:397.07px;font-size:20px;color:#9aa0a6;transform:scaleX(0.8939);">or</span>
<span class="t" style="left:374.65px;top:397.07px;font-size:20px;color:#9aa0a6;transform:scaleX(0.9491);">user</span>
<span class="t" style="left:419.79px;top:397.07px;font-size:20px;color:#9aa0a6;transform:scaleX(0.9146);">ID...</span>
<span class="t" style="left:45.46px;top:465.81px;font-size:19.6px;color:#dee2e6;font-weight:700;transform:scaleX(0.9438);">Profile</span>
<span class="t" style="left:199.93px;top:465.81px;font-size:19.6px;color:#dee2e6;font-weight:700;transform:scaleX(0.9682);">Name</span>
<span class="t" style="left:447.10px;top:465.81px;font-size:19.6px;color:#dee2e6;font-weight:700;transform:scaleX(0.9025);">Apps</span>
<span class="t" style="left:517.73px;top:465.81px;font-size:19.6px;color:#dee2e6;font-weight:700;transform:scaleX(0.8727);">Last</span>
<span class="t" style="left:630.93px;top:465.81px;font-size:19.6px;color:#dee2e6;font-weight:700;transform:scaleX(0.9723);">M.View</span>
<span class="t" style="left:723.09px;top:465.81px;font-size:19.6px;color:#dee2e6;font-weight:700;transform:scaleX(0.9108);">Last Title</span>
<span class="t" style="left:1108.91px;top:465.81px;font-size:19.6px;color:#dee2e6;font-weight:700;transform:scaleX(0.9919);">Note</span>
<span class="t" style="left:200.60px;top:523.49px;font-size:19.5px;color:#4da3ff;transform:scaleX(0.8301);">ALLTRACKCHALLENGE</span>
<span class="t" style="left:447.10px;top:523.49px;font-size:19.5px;color:#f8f9fa;transform:scaleX(0.9247);">80</span>
<span class="t" style="left:517.27px;top:523.49px;font-size:19.5px;color:#38ba50;transform:scaleX(0.9296);">11/26</span>
<span class="t" style="left:565.61px;top:523.49px;font-size:19.5px;color:#38ba50;transform:scaleX(0.8924);">19:03</span>
<span class="t" style="left:630.50px;top:523.49px;font-size:19.5px;color:#ffffff;font-weight:700;transform:scaleX(0.9613);">83</span>
<span class="t" style="left:723.04px;top:523.49px;font-size:19.5px;color:#f8f9fa;transform:scaleX(0.8620);">PROGRAMME</span>
<span class="t" style="left:841.66px;top:523.49px;font-size:19.5px;color:#f8f9fa;transform:scaleX(0.8436);">DOUBLE</span>
<span class="t" style="left:916.70px;top:523.49px;font-size:19.5px;color:#f8f9fa;transform:scaleX(0.8333);">-</span>
<span class="t" style="left:927.71px;top:523.49px;font-size:19.5px;color:#f8f9fa;transform:scaleX(0.8944);">DIVISION</span>
<span class="t" style="left:1010.10px;top:523.49px;font-size:19.5px;color:#f8f9fa;transform:scaleX(0.8490);">OPEN</span>
<span class="t" style="left:1061.72px;top:523.49px;font-size:19.5px;color:#f8f9fa;transform:scaleX(0.8792);">L...</span>
<span class="t" style="left:1109.00px;top:524.56px;font-size:16px;color:#a4a9ae;font-style:italic;transform:scaleX(0.9554);">Replay broadcaster</span>
<span class="t" style="left:108.51px;top:524.19px;font-size:17.5px;color:#ffffff;transform:scaleX(0.9900);">Edit</span>
<span class="t" style="left:200.60px;top:587.04px;font-size:19.5px;color:#4da3ff;transform:scaleX(0.8472);">ATRacers_TV</span>
<span class="t" style="left:447.60px;top:587.04px;font-size:19.5px;color:#f8f9fa;transform:scaleX(0.8683);">21</span>
<span class="t" style="left:517.27px;top:587.04px;font-size:19.5px;color:#38ba50;transform:scaleX(0.9296);">11/26</span>
<span class="t" style="left:565.61px;top:587.04px;font-size:19.5px;color:#38ba50;transform:scaleX(0.8924);">19:03</span>
<span class="t" style="left:630.50px;top:587.04px;font-size:19.5px;color:#ffffff;font-weight:700;transform:scaleX(0.9842);">20</span>
<span class="t" style="left:723.30px;top:587.04px;font-size:19.5px;color:#f8f9fa;transform:scaleX(0.8913);">4ta</span>
<span class="t" style="left:753.53px;top:587.04px;font-size:19.5px;color:#f8f9fa;transform:scaleX(0.8735);">Fecha</span>
<span class="t" style="left:806.09px;top:587.04px;font-size:19.5px;color:#f8f9fa;transform:scaleX(0.9079);">Navarra</span>
<span class="t" style="left:876.70px;top:587.04px;font-size:19.5px;color:#f8f9fa;transform:scaleX(0.8333);">-</span>
<span class="t" style="left:887.00px;top:587.04px;font-size:19.5px;color:#f8f9fa;transform:scaleX(0.9000);">MARO</span>
<span class="t" style="left:946.11px;top:587.04px;font-size:19.5px;color:#f8f9fa;transform:scaleX(0.8858);">PLUMBING</span>
<span class="t" style="left:1041.30px;top:587.04px;font-size:19.5px;color:#f8f9fa;transform:scaleX(0.8973);">CUP...</span>
<span class="t" style="left:1109.00px;top:588.11px;font-size:16px;color:#a4a9ae;font-style:italic;transform:scaleX(0.9554);">Replay broadcaster</span>
<span class="t" style="left:108.51px;top:587.74px;font-size:17.5px;color:#ffffff;transform:scaleX(0.9900);">Edit</span>
<span class="t" style="left:199.66px;top:650.59px;font-size:19.5px;color:#4da3ff;transform:scaleX(0.9409);">Phattiest</span>
<span class="t" style="left:447.49px;top:650.59px;font-size:19.5px;color:#f8f9fa;transform:scaleX(0.9121);">17</span>
<span class="t" style="left:517.27px;top:650.59px;font-size:19.5px;color:#38ba50;transform:scaleX(0.9296);">11/26</span>
<span class="t" style="left:565.61px;top:650.59px;font-size:19.5px;color:#38ba50;transform:scaleX(0.8924);">19:03</span>
<span class="t" style="left:631.21px;top:650.59px;font-size:19.5px;color:#ffffff;font-weight:700;transform:scaleX(0.9882);">18</span>
<span class="t" style="left:723.02px;top:650.59px;font-size:19.5px;color:#f8f9fa;transform:scaleX(0.8807);">Rare</span>
<span class="t" style="left:765.40px;top:650.59px;font-size:19.5px;color:#f8f9fa;transform:scaleX(0.8943);">Wednesday</span>
<span class="t" style="left:864.20px;top:650.59px;font-size:19.5px;color:#f8f9fa;transform:scaleX(0.8736);">Stream,</span>
<span class="t" style="left:930.90px;top:650.59px;font-size:19.5px;color:#f8f9fa;transform:scaleX(0.8762);">35%</span>
<span class="t" style="left:971.60px;top:650.59px;font-size:19.5px;color:#f8f9fa;transform:scaleX(1.0132);">off</span>
<span class="t" style="left:999.20px;top:650.59px;font-size:19.5px;color:#f8f9fa;transform:scaleX(0.9064);">5+</span>
<span class="t" style="left:1026.40px;top:650.59px;font-size:19.5px;color:#f8f9fa;transform:scaleX(0.8636);">Gift</span>
<span class="t" style="left:1060.60px;top:650.59px;font-size:19.5px;color:#f8f9fa;transform:scaleX(0.8778);">su...</span>
<span class="t" style="left:1109.00px;top:651.66px;font-size:16px;color:#a4a9ae;font-style:italic;transform:scaleX(0.9834);">No name shown</span>
<span class="t" style="left:108.51px;top:651.29px;font-size:17.5px;color:#ffffff;transform:scaleX(0.9900);">Edit</span>
<span class="t" style="left:200.60px;top:714.14px;font-size:19.5px;color:#4da3ff;transform:scaleX(0.9036);">Tbone6007_</span>
<span class="t" style="left:447.60px;top:714.14px;font-size:19.5px;color:#f8f9fa;transform:scaleX(0.8683);">21</span>
<span class="t" style="left:517.27px;top:714.14px;font-size:19.5px;color:#38ba50;transform:scaleX(0.9296);">11/26</span>
<span class="t" style="left:565.61px;top:714.14px;font-size:19.5px;color:#38ba50;transform:scaleX(0.8924);">19:03</span>
<span class="t" style="left:631.25px;top:714.14px;font-size:19.5px;color:#ffffff;font-weight:700;transform:scaleX(0.9499);">15</span>
<span class="t" style="left:723.30px;top:714.14px;font-size:19.5px;color:#f8f9fa;transform:scaleX(0.9652);">Wright</span>
<span class="t" style="left:784.10px;top:714.14px;font-size:19.5px;color:#f8f9fa;transform:scaleX(0.9171);">Time</span>
<span class="t" style="left:829.20px;top:714.14px;font-size:19.5px;color:#f8f9fa;transform:scaleX(0.8696);">Arca</span>
<span class="t" style="left:871.30px;top:714.14px;font-size:19.5px;color:#f8f9fa;transform:scaleX(0.8447);">Series</span>
<span class="t" style="left:923.83px;top:714.14px;font-size:19.5px;color:#f8f9fa;transform:scaleX(0.8722);">@</span>
<span class="t" style="left:946.05px;top:714.14px;font-size:19.5px;color:#f8f9fa;transform:scaleX(0.9483);">Richmond</span>
<span class="t" style="left:108.51px;top:714.84px;font-size:17.5px;color:#ffffff;transform:scaleX(0.9900);">Edit</span>
<span class="t" style="left:200.60px;top:777.69px;font-size:19.5px;color:#4da3ff;transform:scaleX(0.8688);">Jam_ONG</span>
<span class="t" style="left:446.90px;top:777.69px;font-size:19.5px;color:#f8f9fa;transform:scaleX(0.8909);">4</span>
<span class="t" style="left:517.27px;top:777.69px;font-size:19.5px;color:#38ba50;transform:scaleX(0.9296);">11/26</span>
<span class="t" style="left:565.61px;top:777.69px;font-size:19.5px;color:#38ba50;transform:scaleX(0.8924);">19:03</span>
<span class="t" style="left:631.26px;top:777.69px;font-size:19.5px;color:#ffffff;font-weight:700;transform:scaleX(0.9403);">13</span>
<span class="t" style="left:723.90px;top:777.69px;font-size:19.5px;color:#f8f9fa;transform:scaleX(0.9029);">Trying</span>
<span class="t" style="left:777.29px;top:777.69px;font-size:19.5px;color:#f8f9fa;transform:scaleX(0.9100);">iRacing</span>
<span class="t" style="left:842.50px;top:777.69px;font-size:19.5px;color:#f8f9fa;transform:scaleX(0.9432);">then</span>
<span class="t" style="left:884.10px;top:777.69px;font-size:19.5px;color:#f8f9fa;transform:scaleX(0.8299);">ACC</span>
<span class="t" style="left:925.04px;top:777.69px;font-size:19.5px;color:#f8f9fa;transform:scaleX(0.9359);">with</span>
<span class="t" style="left:963.31px;top:777.69px;font-size:19.5px;color:#f8f9fa;transform:scaleX(0.8946);">@redstellar_</span>
<span class="t" style="left:1069.12px;top:777.69px;font-size:19.5px;color:#f8f9fa;transform:scaleX(0.8818);">...</span>
<span class="t" style="left:108.51px;top:778.39px;font-size:17.5px;color:#ffffff;transform:scaleX(0.9900);">Edit</span>
<span class="t" style="left:200.60px;top:841.24px;font-size:19.5px;color:#4da3ff;transform:scaleX(0.9316);">252racing</span>
<span class="t" style="left:447.51px;top:841.24px;font-size:19.5px;color:#f8f9fa;transform:scaleX(0.8928);">131</span>
<span class="t" style="left:517.27px;top:841.24px;font-size:19.5px;color:#38ba50;transform:scaleX(0.9296);">11/26</span>
<span class="t" style="left:565.61px;top:841.24px;font-size:19.5px;color:#38ba50;transform:scaleX(0.8924);">19:03</span>
<span class="t" style="left:631.26px;top:841.24px;font-size:19.5px;color:#ffffff;font-weight:700;transform:scaleX(0.9403);">13</span>
<span class="t" style="left:723.90px;top:841.24px;font-size:19.5px;color:#f8f9fa;transform:scaleX(0.9233);">Thanksgiving</span>
<span class="t" style="left:835.68px;top:841.24px;font-size:19.5px;color:#f8f9fa;transform:scaleX(0.9228);">Dirt</span>
<span class="t" style="left:870.65px;top:841.24px;font-size:19.5px;color:#f8f9fa;transform:scaleX(0.9510);">Hosted</span>
<span class="t" style="left:108.51px;top:841.94px;font-size:17.5px;color:#ffffff;transform:scaleX(0.9900);">Edit</span>
<span class="t" style="left:199.72px;top:904.79px;font-size:19.5px;color:#4da3ff;transform:scaleX(0.8814);">Pure_Bread_Fred</span>
<span class="t" style="left:446.90px;top:904.79px;font-size:19.5px;color:#f8f9fa;transform:scaleX(0.8909);">4</span>
<span class="t" style="left:517.27px;top:904.79px;font-size:19.5px;color:#38ba50;transform:scaleX(0.9296);">11/26</span>
<span class="t" style="left:565.61px;top:904.79px;font-size:19.5px;color:#38ba50;transform:scaleX(0.8924);">19:03</span>
<span class="t" style="left:631.21px;top:904.79px;font-size:19.5px;color:#ffffff;font-weight:700;transform:scaleX(0.9882);">10</span>
<span class="t" style="left:723.30px;top:904.79px;font-size:19.5px;color:#f8f9fa;transform:scaleX(0.7760);">SDSS</span>
<span class="t" style="left:770.56px;top:904.79px;font-size:19.5px;color:#f8f9fa;transform:scaleX(0.8430);">Kansas</span>
<span class="t" style="left:831.26px;top:904.79px;font-size:19.5px;color:#f8f9fa;transform:scaleX(0.9420);">(take</span>
<span class="t" style="left:877.50px;top:904.79px;font-size:19.5px;color:#f8f9fa;transform:scaleX(0.8311);">3)</span>
<span class="t" style="left:898.00px;top:904.79px;font-size:19.5px;color:#f8f9fa;transform:scaleX(0.9711);">W/</span>
<span class="t" style="left:927.07px;top:904.79px;font-size:19.5px;color:#f8f9fa;transform:scaleX(0.9299);">@explosivemetal0...</span>
<span class="t" style="left:108.51px;top:905.49px;font-size:17.5px;color:#ffffff;transform:scaleX(0.9900);">Edit</span>
<span class="t" style="left:200.60px;top:968.34px;font-size:19.5px;color:#4da3ff;transform:scaleX(0.9384);">suckatiracing</span>
<span class="t" style="left:446.90px;top:968.34px;font-size:19.5px;color:#f8f9fa;transform:scaleX(0.9201);">44</span>
<span class="t" style="left:517.27px;top:968.34px;font-size:19.5px;color:#38ba50;transform:scaleX(0.9296);">11/26</span>
<span class="t" style="left:565.61px;top:968.34px;font-size:19.5px;color:#38ba50;transform:scaleX(0.8924);">19:03</span>
<span class="t" style="left:631.20px;top:968.34px;font-size:19.5px;color:#ffffff;font-weight:700;transform:scaleX(1.0200);">7</span>
<span class="t" style="left:723.00px;top:968.34px;font-size:19.5px;color:#f8f9fa;transform:scaleX(0.8761);">C12</span>
<span class="t" style="left:759.12px;top:968.34px;font-size:19.5px;color:#f8f9fa;transform:scaleX(0.9805);">Motorsports</span>
<span class="t" style="left:865.97px;top:968.34px;font-size:19.5px;color:#f8f9fa;transform:scaleX(0.9299);">Multiclass</span>
<span class="t" style="left:952.30px;top:968.34px;font-size:19.5px;color:#f8f9fa;transform:scaleX(0.9288);">Winter</span>
<span class="t" style="left:1012.20px;top:968.34px;font-size:19.5px;color:#f8f9fa;transform:scaleX(0.8684);">Season</span>
<span class="t" style="left:1074.50px;top:968.34px;font-size:19.5px;color:#f8f9fa;transform:scaleX(0.8962);">...</span>
<span class="t" style="left:108.51px;top:969.04px;font-size:17.5px;color:#ffffff;transform:scaleX(0.9900);">Edit</span>
<span class="t" style="left:200.60px;top:1031.89px;font-size:19.5px;color:#4da3ff;transform:scaleX(0.9066);">AiRacingTVRanked</span>
<span class="t" style="left:447.40px;top:1031.89px;font-size:19.5px;color:#f8f9fa;transform:scaleX(0.9024);">844</span>
<span class="t" style="left:517.27px;top:1031.89px;font-size:19.5px;color:#38ba50;transform:scaleX(0.9296);">11/26</span>
<span class="t" style="left:565.61px;top:1031.89px;font-size:19.5px;color:#38ba50;transform:scaleX(0.8924);">19:03</span>
<span class="t" style="left:631.60px;top:1031.89px;font-size:19.5px;color:#ffffff;font-weight:700;transform:scaleX(0.8909);">5</span>
<span class="t" style="left:753.36px;top:1031.89px;font-size:19.5px;color:#f8f9fa;transform:scaleX(0.8388);">FIA</span>
<span class="t" style="left:784.80px;top:1031.89px;font-size:19.5px;color:#f8f9fa;transform:scaleX(0.7987);">F4</span>
<span class="t" style="left:808.40px;top:1031.89px;font-size:19.5px;color:#f8f9fa;transform:scaleX(0.8977);">Regional</span>
<span class="t" style="left:884.70px;top:1031.89px;font-size:19.5px;color:#f8f9fa;transform:scaleX(0.8638);">Asia</span>
<span class="t" style="left:924.00px;top:1031.89px;font-size:19.5px;color:#f8f9fa;transform:scaleX(0.7000);">|</span>
<span class="t" style="left:933.60px;top:1031.89px;font-size:19.5px;color:#f8f9fa;transform:scaleX(0.9241);">Open</span>
<span class="t" style="left:983.12px;top:1031.89px;font-size:19.5px;color:#f8f9fa;transform:scaleX(0.8828);">MIC</span>
<span class="t" style="left:1021.30px;top:1031.89px;font-size:19.5px;color:#f8f9fa;transform:scaleX(0.7000);">|</span>
<span class="t" style="left:1030.56px;top:1031.89px;font-size:19.5px;color:#f8f9fa;transform:scaleX(0.9413);">!com...</span>
<span class="t" style="left:1109.00px;top:1032.96px;font-size:16px;color:#a4a9ae;font-style:italic;transform:scaleX(1.0064);">No driver</span>
<span class="t" style="left:108.51px;top:1032.59px;font-size:17.5px;color:#ffffff;transform:scaleX(0.9900);">Edit</span>
<span class="t" style="left:199.68px;top:1095.44px;font-size:19.5px;color:#4da3ff;transform:scaleX(0.9170);">BufordTHarness</span>
<span class="t" style="left:447.60px;top:1095.44px;font-size:19.5px;color:#f8f9fa;transform:scaleX(0.8683);">21</span>
<span class="t" style="left:517.27px;top:1095.44px;font-size:19.5px;color:#38ba50;transform:scaleX(0.9296);">11/26</span>
<span class="t" style="left:565.61px;top:1095.44px;font-size:19.5px;color:#38ba50;transform:scaleX(0.8924);">19:03</span>
<span class="t" style="left:631.60px;top:1095.44px;font-size:19.5px;color:#ffffff;font-weight:700;transform:scaleX(0.8909);">5</span>
<span class="t" style="left:722.96px;top:1095.44px;font-size:19.5px;color:#f8f9fa;transform:scaleX(0.9439);">Burning</span>
<span class="t" style="left:792.10px;top:1095.44px;font-size:19.5px;color:#f8f9fa;transform:scaleX(0.9180);">some</span>
<span class="t" style="left:841.61px;top:1095.44px;font-size:19.5px;color:#f8f9fa;transform:scaleX(0.8909);">laps</span>
<span class="t" style="left:1109.00px;top:1096.51px;font-size:16px;color:#a4a9ae;font-style:italic;transform:scaleX(0.9340);">Sub VODs</span>
<span class="t" style="left:108.51px;top:1096.14px;font-size:17.5px;color:#ffffff;transform:scaleX(0.9900);">Edit</span>
<span class="t" style="left:199.66px;top:1158.99px;font-size:19.5px;color:#4da3ff;transform:scaleX(0.9387);">racingjake24</span>
<span class="t" style="left:447.40px;top:1158.99px;font-size:19.5px;color:#f8f9fa;transform:scaleX(0.9211);">32</span>
<span class="t" style="left:517.27px;top:1158.99px;font-size:19.5px;color:#38ba50;transform:scaleX(0.9296);">11/26</span>
<span class="t" style="left:565.61px;top:1158.99px;font-size:19.5px;color:#38ba50;transform:scaleX(0.8924);">19:03</span>
<span class="t" style="left:631.60px;top:1158.99px;font-size:19.5px;color:#ffffff;font-weight:700;transform:scaleX(0.8909);">5</span>
<span class="t" style="left:723.90px;top:1158.99px;font-size:19.5px;color:#f8f9fa;transform:scaleX(0.9464);">Getting</span>
<span class="t" style="left:789.20px;top:1158.99px;font-size:19.5px;color:#f8f9fa;transform:scaleX(0.9426);">out</span>
<span class="t" style="left:821.80px;top:1158.99px;font-size:19.5px;color:#f8f9fa;transform:scaleX(0.8786);">of</span>
<span class="t" style="left:843.05px;top:1158.99px;font-size:19.5px;color:#f8f9fa;transform:scaleX(0.9479);">Negative</span>
<span class="t" style="left:921.65px;top:1158.99px;font-size:19.5px;color:#f8f9fa;transform:scaleX(0.9532);">Irating</span>
<span class="t" style="left:979.90px;top:1158.99px;font-size:19.5px;color:#f8f9fa;transform:scaleX(0.9057);">and</span>
<span class="t" style="left:1016.10px;top:1158.99px;font-size:19.5px;color:#f8f9fa;transform:scaleX(0.8806);">Saftey</span>
<span class="t" style="left:1070.94px;top:1158.99px;font-size:19.5px;color:#f8f9fa;transform:scaleX(0.8601);">...</span>
<span class="t" style="left:108.51px;top:1159.69px;font-size:17.5px;color:#ffffff;transform:scaleX(0.9900);">Edit</span>
<span class="t" style="left:199.65px;top:1222.54px;font-size:19.5px;color:#4da3ff;transform:scaleX(0.9481);">kevydreamz</span>
<span class="t" style="left:447.40px;top:1222.54px;font-size:19.5px;color:#f8f9fa;transform:scaleX(0.9211);">33</span>
<span class="t" style="left:517.27px;top:1222.54px;font-size:19.5px;color:#38ba50;transform:scaleX(0.9296);">11/26</span>
<span class="t" style="left:565.61px;top:1222.54px;font-size:19.5px;color:#38ba50;transform:scaleX(0.8924);">19:03</span>
<span class="t" style="left:630.70px;top:1222.54px;font-size:19.5px;color:#ffffff;font-weight:700;transform:scaleX(1.0364);">4</span>
<span class="t" style="left:723.03px;top:1222.54px;font-size:19.5px;color:#f8f9fa;transform:scaleX(0.8687);">iRacing,</span>
<span class="t" style="left:791.19px;top:1222.54px;font-size:19.5px;color:#f8f9fa;transform:scaleX(0.9134);">new</span>
<span class="t" style="left:830.70px;top:1222.54px;font-size:19.5px;color:#f8f9fa;transform:scaleX(0.9015);">to</span>
<span class="t" style="left:852.30px;top:1222.54px;font-size:19.5px;color:#f8f9fa;transform:scaleX(0.6357);">C</span>
<span class="t" style="left:869.20px;top:1222.54px;font-size:19.5px;color:#f8f9fa;transform:scaleX(0.8219);">class,</span>
<span class="t" style="left:916.70px;top:1222.54px;font-size:19.5px;color:#f8f9fa;transform:scaleX(0.9635);">starting</span>
<span class="t" style="left:984.00px;top:1222.54px;font-size:19.5px;color:#f8f9fa;transform:scaleX(0.9076);">to</span>
<span class="t" style="left:1005.70px;top:1222.54px;font-size:19.5px;color:#f8f9fa;transform:scaleX(0.9294);">compete...</span>
<span class="t" style="left:108.51px;top:1223.24px;font-size:17.5px;color:#ffffff;transform:scaleX(0.9900);">Edit</span>
<div class="abs" style="left:0;top:1235.3px;width:1298px;height:3px;background:#0a0a0a"></div>
</body></html>
